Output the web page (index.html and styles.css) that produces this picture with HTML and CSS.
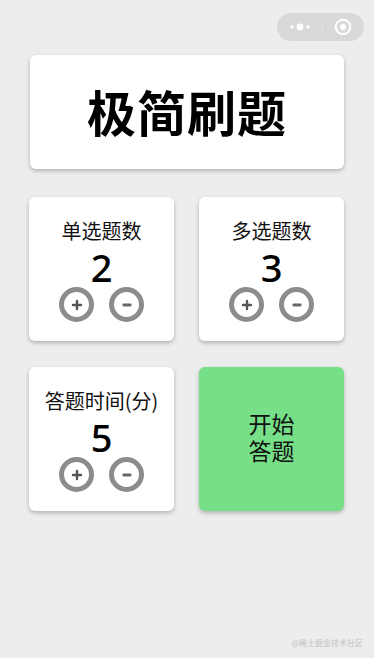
FILE: index.html
```html
<!DOCTYPE html>
<html lang="zh">
<head>
<meta charset="utf-8">
<link rel="stylesheet" href="styles.css">
</head>
<body>
<div class="page">
  <div class="topbar">
    <div class="capsule">
      <svg class="dots" width="22" height="8" viewBox="0 0 22 8"><circle cx="3" cy="4" r="1.7" fill="#fff"/><circle cx="11" cy="4" r="3.4" fill="#fff"/><circle cx="19" cy="4" r="1.7" fill="#fff"/></svg>
      <span class="sep"></span>
      <svg class="target" width="18" height="18" viewBox="0 0 18 18"><circle cx="9" cy="9" r="7.2" fill="none" stroke="#fff" stroke-width="2"/><circle cx="9" cy="9" r="3" fill="#fff"/></svg>
    </div>
  </div>
  <div class="title-card"><h1 class="title">极简刷题</h1></div>
  <div class="grid">
    <div class="card">
      <div class="label">单选题数</div>
      <div class="num">2</div>
      <div class="btns">
        <span class="btn"><svg viewBox="0 0 20 20" width="16" height="16"><path d="M10 5v10M5 10h10" stroke="#555" stroke-width="3" stroke-linecap="round"/></svg></span>
        <span class="btn"><svg viewBox="0 0 20 20" width="16" height="16"><path d="M6 10h8" stroke="#666" stroke-width="3.6" stroke-linecap="round"/></svg></span>
      </div>
    </div>
    <div class="card">
      <div class="label">多选题数</div>
      <div class="num">3</div>
      <div class="btns">
        <span class="btn"><svg viewBox="0 0 20 20" width="16" height="16"><path d="M10 5v10M5 10h10" stroke="#555" stroke-width="3" stroke-linecap="round"/></svg></span>
        <span class="btn"><svg viewBox="0 0 20 20" width="16" height="16"><path d="M6 10h8" stroke="#666" stroke-width="3.6" stroke-linecap="round"/></svg></span>
      </div>
    </div>
    <div class="card">
      <div class="label">答题时间(分)</div>
      <div class="num">5</div>
      <div class="btns">
        <span class="btn"><svg viewBox="0 0 20 20" width="16" height="16"><path d="M10 5v10M5 10h10" stroke="#555" stroke-width="3" stroke-linecap="round"/></svg></span>
        <span class="btn"><svg viewBox="0 0 20 20" width="16" height="16"><path d="M6 10h8" stroke="#666" stroke-width="3.6" stroke-linecap="round"/></svg></span>
      </div>
    </div>
    <div class="card start">
      <div class="start-line">开始</div>
      <div class="start-line">答题</div>
    </div>
  </div>
  <div class="spacer"></div>
  <div class="watermark">@稀土掘金技术社区</div>
</div>
</body>
</html>
```
FILE: styles.css
```css
html, body {
  margin: 0;
  padding: 0;
  background: #ededed;
}
body {
  font-family: "Noto Sans CJK SC", "Noto Sans", sans-serif;
  color: #111;
}
.page {
  width: 374px;
  height: 658px;
  display: flex;
  flex-direction: column;
  box-sizing: border-box;
}
.topbar {
  display: flex;
  justify-content: flex-end;
  padding: 13px 10px 0 0;
  height: 28px;
}
.capsule {
  width: 87px;
  height: 28px;
  border-radius: 14px;
  background: #d9d9d9;
  display: flex;
  align-items: center;
  justify-content: space-between;
  padding: 0 12px 0 12px;
  box-sizing: border-box;
}
.sep {
  width: 1px;
  height: 16px;
  background: #e0e0e0;
}
.dots { display: block; }
.target { display: block; }
.title-card {
  margin: 14px 0 0 30px;
  width: 314px;
  height: 114px;
  background: #fff;
  border-radius: 6px;
  box-shadow: 0 2px 4px rgba(0,0,0,0.25);
  display: flex;
  align-items: center;
  justify-content: center;
}
.title {
  margin: 0 0 4px 0;
  font-size: 49px;
  font-weight: 700;
  color: #000;
  letter-spacing: 1px;
  line-height: 1;
}
.grid {
  margin: 28px 0 0 29px;
  display: grid;
  grid-template-columns: 145px 145px;
  grid-auto-rows: 144px;
  column-gap: 25px;
  row-gap: 26px;
}
.card {
  background: #fff;
  border-radius: 6px;
  box-shadow: 0 2px 4px rgba(0,0,0,0.25);
  display: flex;
  flex-direction: column;
  align-items: center;
}
.label {
  margin-top: 21px;
  font-size: 20px;
  line-height: 26px;
  color: #111;
}
.num {
  font-family: "Noto Sans", "Liberation Sans", sans-serif;
  font-size: 38px;
  font-weight: 500;
  line-height: 40px;
  margin-top: 3px;
  color: #000;
}
.btns {
  display: flex;
  gap: 15px;
  margin-top: 0px;
}
.btn {
  width: 35px;
  height: 35px;
  border-radius: 50%;
  border: 5px solid #8c8c8c;
  box-sizing: border-box;
  background: #fff;
  display: flex;
  align-items: center;
  justify-content: center;
}
.btn svg { display: block; }
.start {
  background: #77df87;
  justify-content: center;
}
.start-line {
  font-family: "Liberation Sans", "Noto Sans CJK SC", sans-serif;
  font-size: 23px;
  line-height: 27px;
  height: 27px;
  text-align: center;
  color: #111;
}
.spacer { flex: 1; }
.watermark {
  align-self: flex-end;
  font-size: 8px;
  line-height: 10px;
  color: #c2c2c2;
  padding: 0 11px 10px 0;
}
```
